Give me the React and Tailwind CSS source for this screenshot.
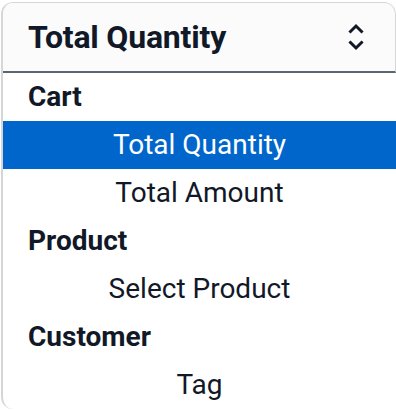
import React from "react";

const rows = [
  { type: "group", label: "Cart" },
  { type: "opt", label: "Total Quantity", selected: true },
  { type: "opt", label: "Total Amount" },
  { type: "group", label: "Product" },
  { type: "opt", label: "Select Product" },
  { type: "group", label: "Customer" },
  { type: "opt", label: "Tag" },
];

export default function App() {
  return (
    <div className="w-[396px] h-[410px] bg-white overflow-hidden pt-[2px] pl-[1px]" style={{ fontFamily: "Roboto, 'Noto Sans', sans-serif" }}>
      <div className="w-[395px] h-[407px] rounded-xl border-l-2 border-t border-[#d6d6d6] bg-white overflow-hidden flex flex-col">
        <div className="w-[393px] h-[70px] shrink-0 bg-[#fbfbfb] border-r border-r-[#d6d6d6] rounded-tr-xl border-b-2 border-b-[#5d6572] flex items-center justify-between pl-[25px] pr-[30px]">
          <span className="text-[32px] font-bold text-[#111827] leading-none tracking-[-0.2px]">Total Quantity</span>
          <svg width="18" height="28" viewBox="0 0 18 28" fill="none" stroke="#111827" strokeWidth="3" strokeLinecap="square" strokeLinejoin="miter">
            <path d="M3.5 8.5 L9 3 L14.5 8.5" />
            <path d="M3.5 19.5 L9 25 L14.5 19.5" />
          </svg>
        </div>
        <div className="flex flex-col w-[393px]">
          {rows.map((r, i) =>
            r.type === "group" ? (
              <div key={i} className="h-[48px] shrink-0 flex items-center pl-[25px] text-[28px] font-bold text-[#111827] leading-none">
                {r.label}
              </div>
            ) : (
              <div
                key={i}
                className={
                  r.selected
                    ? "h-[48px] shrink-0 flex items-center justify-center text-[28px] leading-none text-white bg-[#0066cc]"
                    : "h-[48px] shrink-0 flex items-center justify-center text-[28px] leading-none text-[#111827]"
                }
              >
                {r.label}
              </div>
            )
          )}
        </div>
      </div>
    </div>
  );
}
